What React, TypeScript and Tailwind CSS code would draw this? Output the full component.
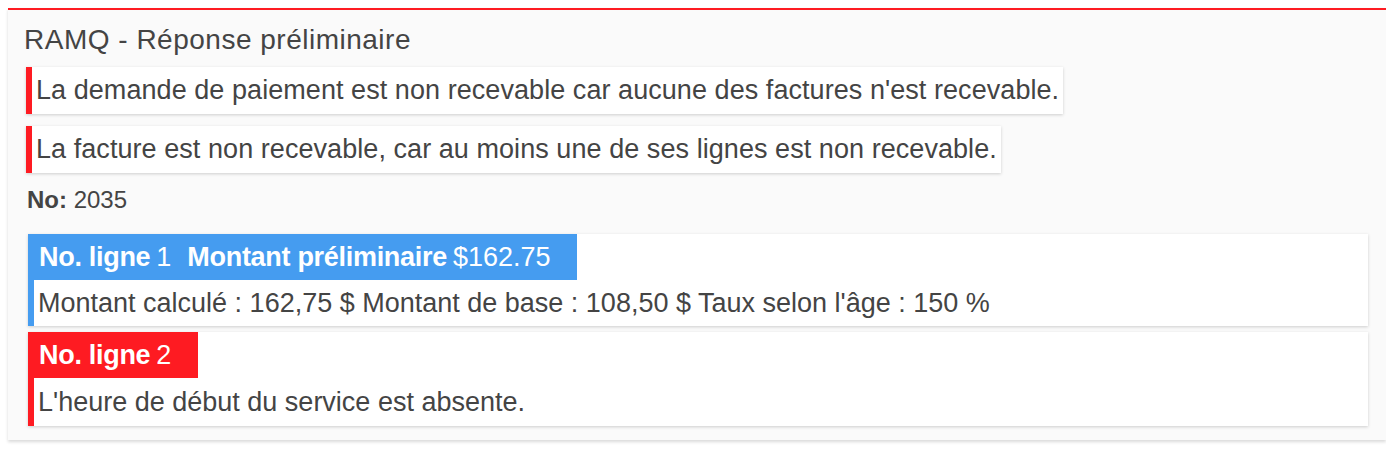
const red = 'bg-[#fe1b22]';

interface LigneProps {
  no: number;
  montant?: string;
  message: string;
  ok: boolean;
}

const Ligne = (props: LigneProps) => {
  const { no, montant, message, ok } = props;
  return (
    <div
      className={`bg-white shadow-[0_1px_3px_rgba(0,0,0,0.18)] border-l-[6px] ${
        ok ? 'border-[#459cf0]' : 'border-[#fe1b22]'
      }`}
    >
      <div
        className={`inline-flex items-center h-[46px] -ml-[6px] pl-[11px] pr-[27px] text-white text-[27px] ${
          ok ? 'bg-[#459cf0]' : red
        }`}
      >
        <span className="font-bold tracking-[-0.3px]">No. ligne</span>
        <span className="ml-[6px]">{no}</span>
        {montant && (
          <>
            <span className="ml-[16px] font-bold tracking-[-0.3px]">Montant préliminaire</span>
            <span className="ml-[6px]">{montant}</span>
          </>
        )}
      </div>
      <div className={`${ok ? 'h-[46px]' : 'h-[48px]'} flex items-center pl-[4px] text-[27px] text-[#444]`}>
        {message}
      </div>
    </div>
  );
};

const Alerte = ({ texte }: { texte: string }) => (
  <div className="self-start flex items-center bg-white border-l-[6px] border-[#fe1b22] shadow-[0_1px_3px_rgba(0,0,0,0.18)] h-[47px] pl-[4px] pr-[4px] text-[27px] tracking-[0.06px] text-[#444]">
    {texte}
  </div>
);

export default function App() {
  return (
    <div className="w-[1386px] h-[450px] bg-white pt-2 pl-2 overflow-hidden font-['Liberation_Sans',Arial,sans-serif]">
      <div className="border-t-2 border-[#fe1b22] bg-[#fafafa] shadow-[0_2px_3px_rgba(0,0,0,0.15)] pl-4 pr-[18px] pt-[14px] pb-[14px] flex flex-col">
        <h2 className="text-[28px] leading-[32px] tracking-[0.5px] text-[#444]">RAMQ - Réponse préliminaire</h2>
        <div className="flex flex-col gap-3 mt-[11px] ml-[2px]">
          <Alerte texte="La demande de paiement est non recevable car aucune des factures n'est recevable." />
          <Alerte texte="La facture est non recevable, car au moins une de ses lignes est non recevable." />
        </div>
        <div className="mt-[13px] ml-[3px] text-[24px] leading-[28px] text-[#444]">
          <span className="font-bold">No:</span> 2035
        </div>
        <div className="flex flex-col gap-[6px] mt-[20px] ml-1">
          <Ligne
            no={1}
            ok
            montant="$162.75"
            message="Montant calculé : 162,75 $ Montant de base : 108,50 $ Taux selon l'âge : 150 %"
          />
          <Ligne no={2} ok={false} message="L'heure de début du service est absente." />
        </div>
      </div>
    </div>
  );
}
